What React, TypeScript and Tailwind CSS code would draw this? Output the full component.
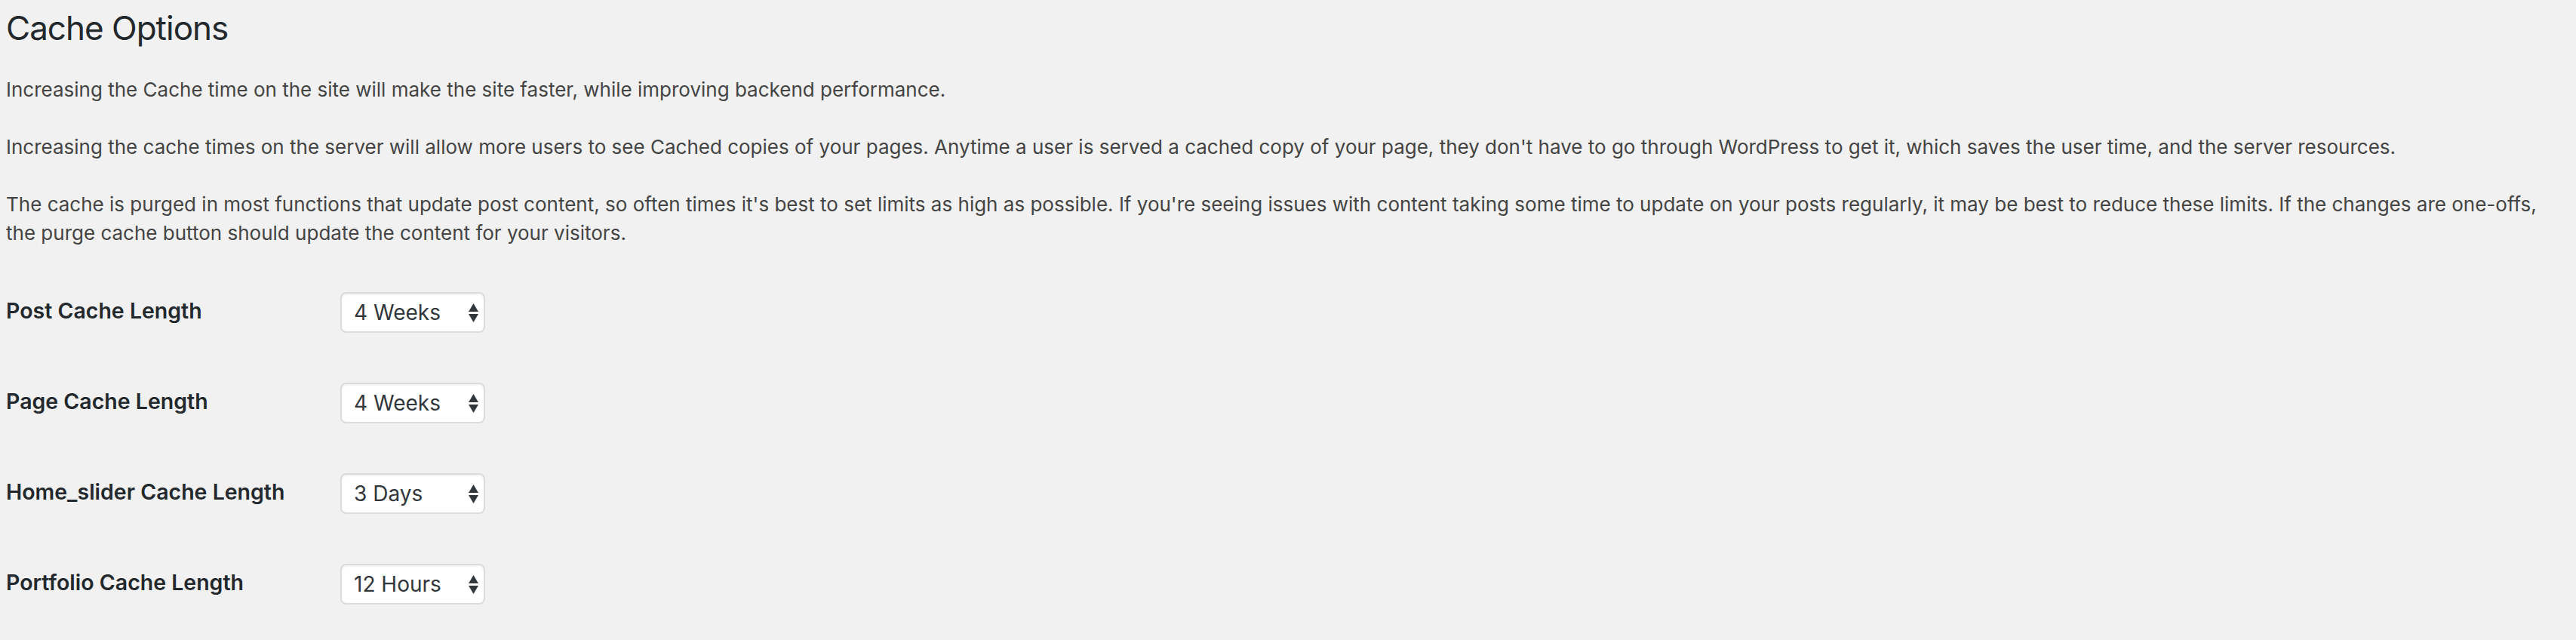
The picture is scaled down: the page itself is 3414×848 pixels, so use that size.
import { useState } from "react";

const OPTIONS = ["1 Hour", "12 Hours", "1 Day", "3 Days", "1 Week", "2 Weeks", "4 Weeks"];

const SETTINGS = [
  { id: "post", label: "Post Cache Length", value: "4 Weeks" },
  { id: "page", label: "Page Cache Length", value: "4 Weeks" },
  { id: "home_slider", label: "Home_slider Cache Length", value: "3 Days" },
  { id: "portfolio", label: "Portfolio Cache Length", value: "12 Hours" },
];

function CacheSelect({ id, initial }: { id: string; initial: string }) {
  const [value, setValue] = useState(initial);

  return (
    <div className="relative w-[192px]">
      <select
        id={id}
        value={value}
        onChange={(e) => setValue(e.target.value)}
        className="block h-[54px] w-full appearance-none rounded-[8px] border-2 border-[#dcdcdc] bg-white pl-[16px] pr-[40px] text-[28px] leading-[34px] text-[#32373c] shadow-[inset_0_2px_3px_rgba(0,0,0,0.05)] outline-none"
      >
        {OPTIONS.map((o) => (
          <option key={o} value={o}>
            {o}
          </option>
        ))}
      </select>
      {/* up/down arrows drawn over the select */}
      <svg
        className="pointer-events-none absolute right-[9px] top-[15px]"
        width="13"
        height="25"
        viewBox="0 0 13 25"
      >
        <path d="M0 11 L6.5 0 L13 11 Z" fill="#32373c" />
        <path d="M0 14 L13 14 L6.5 25 Z" fill="#32373c" />
      </svg>
    </div>
  );
}

export default function App() {
  return (
    <div className="min-h-[848px] bg-[#f1f1f1] pl-[8px] pr-[40px] pt-[8px] font-['Inter','Noto_Sans',sans-serif] text-[#444]">
      <h1 className="text-[44px] font-normal leading-[58px] tracking-[-1px] text-[#23282d]">Cache Options</h1>

      <div className="mt-[34px] text-[26px] leading-[38px]">
        <p className="mb-[38px]">
          Increasing the Cache time on the site will make the site faster, while improving backend performance.
        </p>
        <p className="mb-[38px]">
          Increasing the cache times on the server will allow more users to see Cached copies of your pages. Anytime a
          user is served a cached copy of your page, they don't have to go through WordPress to get it, which saves the
          user time, and the server resources.
        </p>
        <p>
          The cache is purged in most functions that update post content, so often times it's best to set limits as
          high as possible. If you're seeing issues with content taking some time to update on your posts regularly, it
          may be best to reduce these limits. If the changes are one-offs, the purge cache button should update the
          content for your visitors.
        </p>
      </div>

      <div className="mt-[26px] flex flex-col">
        {SETTINGS.map((s) => (
          <div key={s.id} className="flex h-[120px] items-center">
            <label
              htmlFor={s.id}
              className="-mt-[4px] w-[443px] shrink-0 text-[28.5px] font-semibold leading-[34px] text-[#23282d]"
            >
              {s.label}
            </label>
            <CacheSelect id={s.id} initial={s.value} />
          </div>
        ))}
      </div>
    </div>
  );
}
